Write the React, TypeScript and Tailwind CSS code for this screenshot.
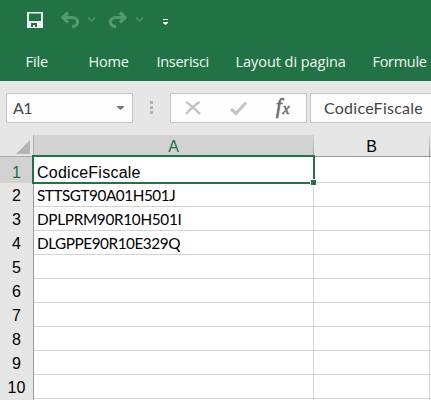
import React from 'react';

const TABS = [
  { label: 'File', box: 'ml-[25.5px] w-[63px] tracking-[-0.1px]' },
  { label: 'Home', box: 'w-[68px] tracking-[-0.2px]' },
  { label: 'Inserisci', box: 'w-[79px] tracking-[-0.3px]' },
  { label: 'Layout di pagina', box: 'w-[137px] tracking-[-0.05px]' },
  { label: 'Formule', box: 'w-[58px] tracking-[-0.3px]' },
];

const ROWS = ['CodiceFiscale', 'STTSGT90A01H501J', 'DPLPRM90R10H501I', 'DLGPPE90R10E329Q', '', '', '', '', '', ''];
const TRACKING = ['', 'tracking-[-0.45px]', 'tracking-[-0.3px]', 'tracking-[-0.45px]'];

function QuickAccess() {
  return (
    <svg className="block h-[42px] w-[431px]" viewBox="0 0 431 42" fill="none">
      <path fill="#f3f3f3" fillRule="evenodd" d="M27 12h16v16H27zM29 13.500v7.500h12v-7.500zM31 23v4h2v-2h2v2h2v-4z" />
      <g stroke="#559970" strokeWidth="3.2">
        <path d="M64 17.500h8a5.500 4.500 0 0 1 0 9.200" />
        <path d="M68 12.500l-5 5 5 5" />
        <path d="M124 17.500h-8a5.500 4.500 0 0 0 0 9.200" />
        <path d="M120 12.500l5 5-5 5" />
      </g>
      <path stroke="#4b9168" strokeWidth="1.6" d="M88 17.500l3.500 3.500 3.500-3.500M136 17.500l3.500 3.500 3.500-3.500" />
      <path fill="#fff" d="M163 19h5v1h-5zM163 22h5v1l-2.500 2-2.500-2z" />
    </svg>
  );
}

function FormulaBar() {
  return (
    <div className="flex h-[54px] bg-[#e6e6e6] pt-3 font-[Lato,'Open_Sans',sans-serif] text-[#444]">
      <div className="ml-1.5 flex h-[30px] w-[127px] shrink-0 items-center justify-between border border-[#c6c6c6] bg-[#fdfdfd] pr-2 pl-1.5">
        <span className="text-[16px] leading-5 tracking-[-0.5px]">A1</span>
        <svg className="h-1 w-[7px]" viewBox="0 0 7 4"><path fill="#777" d="M0 0h7v1L3.500 4 0 1z" /></svg>
      </div>
      <div className="mt-2 ml-[17px] flex w-[3px] shrink-0 flex-col gap-0.5">
        <i className="size-[3px] bg-[#b1b1b1]" />
        <i className="size-[3px] bg-[#b1b1b1]" />
        <i className="size-[3px] bg-[#b1b1b1]" />
      </div>
      <div className="ml-[17px] h-[30px] w-[137px] shrink-0 border border-[#c6c6c6] bg-[#fdfdfd]">
        <svg className="block h-7 w-[135px]" viewBox="171 94 135 28" fill="none">
          <path stroke="#c2c2c2" strokeWidth="2.4" d="M186 102c5 3 9 7 14 12M199.500 102c-5 3-9 7-13.500 12" />
          <path stroke="#c6c6c6" strokeWidth="3.200" d="M231 109l5 4.500 10-11" />
          <text x="276" y="112.500" fill="#6b6b6b" stroke="#6b6b6b" strokeWidth=".7" fontFamily="Liberation Serif, serif" fontStyle="italic" fontSize="20">f</text>
          <text x="282.500" y="114" fill="#6b6b6b" stroke="#6b6b6b" strokeWidth=".5" fontFamily="Liberation Serif, serif" fontStyle="italic" fontSize="16">x</text>
        </svg>
      </div>
      <div className="ml-[3px] flex h-[30px] w-[130px] shrink-0 items-center border border-[#c6c6c6] bg-[#fdfdfd] pl-[13px]">
        <span className="text-[16px] leading-5 tracking-[0.25px]">CodiceFiscale</span>
      </div>
    </div>
  );
}

function Sheet() {
  return (
    <div className="relative font-['Liberation_Sans',Arial,sans-serif] text-[16px] text-black">
      <div className="flex h-[22px] bg-[#e6e6e6]">
        <div className="flex w-[34px] shrink-0 border-r border-b border-r-[#ababab] border-b-[#ababab] pt-[5px] pl-4">
          <svg className="size-3.5" viewBox="0 0 14 14"><path fill="#b5b5b5" d="M14 0v14H0z" /></svg>
        </div>
        <div className="w-[279px] shrink-0 border-b border-[#999] bg-[#d2d2d2] text-center leading-[23px] text-[#217346]">A</div>
        <div className="w-px shrink-0 bg-gradient-to-b from-[#d8d8d8] to-[#999]" />
        <div className="w-[115px] shrink-0 border-b border-[#999] text-center leading-[23px]">B</div>
        <div className="w-px shrink-0 bg-gradient-to-b from-[#d8d8d8] to-[#999]" />
        <div className="w-px shrink-0 border-b border-[#999]" />
      </div>
      {ROWS.map((value, i) => (
        <div key={i} className={`flex ${i === 0 ? 'h-[26px]' : 'h-6'}`}>
          <div className={`flex w-[34px] shrink-0 flex-col border-r border-[#999] ${i === 0 ? 'bg-[#d2d2d2] text-[#217346]' : 'bg-[#e6e6e6]'}`}>
            <span className={`flex-1 text-center ${i === 0 ? 'leading-[31px]' : 'leading-[25px]'}`}>{i + 1}</span>
            <i className="h-px bg-gradient-to-r from-[#d8d8d8] to-[#999]" />
          </div>
          <div className={`w-[280px] shrink-0 overflow-hidden border-r border-b border-[#d4d4d4] bg-white pl-[3px] whitespace-nowrap ${i === 0 ? 'leading-[31px] tracking-[0.25px]' : `font-[Lato,'Open_Sans',sans-serif] text-[15.3px] leading-[24px] ${TRACKING[i] ?? ''}`}`}>{value}</div>
          <div className="w-[116px] shrink-0 border-r border-b border-[#d4d4d4] bg-white" />
          <div className="w-px shrink-0 border-b border-[#d4d4d4] bg-white" />
        </div>
      ))}
      <div className="flex h-6">
        <div className="w-[34px] shrink-0 border-r border-[#999] bg-[#e6e6e6]" />
        <div className="w-[280px] shrink-0 border-r border-[#d4d4d4] bg-white" />
        <div className="w-[116px] shrink-0 border-r border-[#d4d4d4] bg-white" />
        <div className="w-px shrink-0 bg-white" />
      </div>
      <div className="pointer-events-none absolute top-5 left-8 h-[29px] w-[283px] border-2 border-[#217346]">
        <i className="absolute -right-[4px] -bottom-[4px] size-[7px] border border-white bg-[#217346]" />
      </div>
    </div>
  );
}

export default function App() {
  return (
    <div className="h-[400px] w-[431px] overflow-hidden bg-[#e6e6e6]">
      <header className="h-[81px] bg-[#217346]">
        <QuickAccess />
        <nav className="flex pt-[9px] font-['Open_Sans','Noto_Sans',sans-serif] text-[14.5px] leading-[22px] whitespace-nowrap text-[#f3f8f5]">
          {TABS.map((tab) => (
            <span key={tab.label} className={`shrink-0 ${tab.box}`}>{tab.label}</span>
          ))}
        </nav>
      </header>
      <FormulaBar />
      <Sheet />
    </div>
  );
}
